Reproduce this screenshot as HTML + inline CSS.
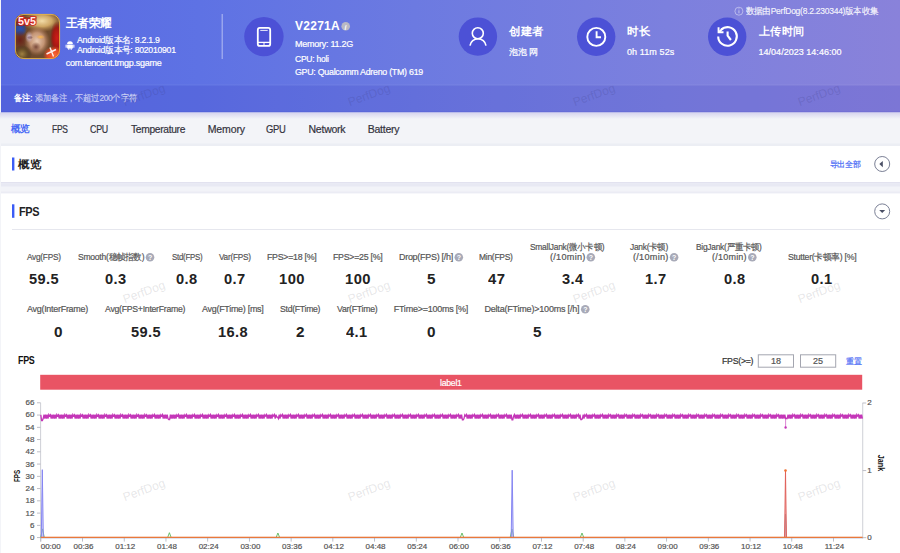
<!DOCTYPE html>
<html><head><meta charset="utf-8">
<style>
html,body{margin:0;padding:0;width:900px;height:553px;overflow:hidden;background:#f3f4f8;font-family:"Liberation Sans",sans-serif;}
.t{position:absolute;white-space:nowrap;display:block;}
.r{-webkit-text-stroke:0.2px currentColor;}
svg{position:absolute;left:0;top:0;}
</style></head><body>
<svg width="900" height="553" viewBox="0 0 900 553">
<defs>
<linearGradient id="hg" x1="0" y1="0" x2="1" y2="0">
<stop offset="0" stop-color="#586ae2"/>
<stop offset="0.22" stop-color="#5e72e4"/>
<stop offset="0.46" stop-color="#6c7ae1"/>
<stop offset="0.74" stop-color="#7c80de"/>
<stop offset="1" stop-color="#8982da"/>
</linearGradient>
<linearGradient id="sh" x1="0" y1="0" x2="0" y2="1">
<stop offset="0" stop-color="#d6d4ee"/>
<stop offset="1" stop-color="#f3f4f8"/>
</linearGradient>
<linearGradient id="cs" x1="0" y1="0" x2="0" y2="1">
<stop offset="0" stop-color="#e6e7ef"/>
<stop offset="1" stop-color="#eff0f5"/>
</linearGradient>
<radialGradient id="face" cx="0.55" cy="0.55" r="0.6">
<stop offset="0" stop-color="#e8b890"/>
<stop offset="0.45" stop-color="#b87850"/>
<stop offset="1" stop-color="#5a3020"/>
</radialGradient>
<clipPath id="icl"><rect x="15" y="14" width="45" height="45" rx="9"/></clipPath>
</defs>
<!-- page left strip -->
<rect x="0" y="0" width="900" height="553" fill="#f3f4f8"/>
<!-- header -->
<rect x="1" y="0" width="899" height="112.5" fill="url(#hg)"/>
<rect x="1" y="84.3" width="899" height="1.2" fill="#fff" fill-opacity="0.05"/>
<rect x="1" y="85.6" width="899" height="26.9" fill="#3030b8" fill-opacity="0.14"/>
<rect x="1" y="111.3" width="899" height="1.2" fill="#3030c8" fill-opacity="0.12"/>
<rect x="0" y="112.5" width="900" height="6.5" fill="url(#sh)"/>
<!-- android icon -->
<g fill="#fff">
<path d="M67.1 44.1 A2.9 2.9 0 0 1 72.9 44.1 Z"/>
<rect x="67.1" y="44.5" width="5.8" height="4" rx="0.5"/>
<rect x="65.6" y="44.6" width="1.1" height="3.1" rx="0.5"/>
<rect x="73.3" y="44.6" width="1.1" height="3.1" rx="0.5"/>
<rect x="68.2" y="48" width="1.2" height="1.8" rx="0.4"/>
<rect x="70.6" y="48" width="1.2" height="1.8" rx="0.4"/>
</g>
<!-- divider -->
<rect x="221.6" y="14" width="1.2" height="45" fill="#fff" fill-opacity="0.45"/>
<!-- circles -->
<circle cx="263.9" cy="36.6" r="19.7" fill="#4c51d6"/>
<circle cx="477.9" cy="36.6" r="19.2" fill="#4c51d6"/>
<circle cx="596.2" cy="36.8" r="19.2" fill="#4c51d6"/>
<circle cx="727.2" cy="36.7" r="19.2" fill="#4c51d6"/>
<!-- phone icon -->
<g fill="none" stroke="#fff">
<rect x="257.8" y="27.9" width="12.4" height="18" rx="2" stroke-width="1.8"/>
<line x1="260.3" y1="30.4" x2="267.7" y2="30.4" stroke-width="0.9"/>
<line x1="258" y1="42.4" x2="270" y2="42.4" stroke-width="1.3"/>
<line x1="264" y1="42.4" x2="264" y2="45" stroke-width="1"/>
</g>
<!-- info i -->
<circle cx="345.7" cy="26.2" r="4.3" fill="#b9b9c4"/>
<text x="344.6" y="29.6" font-size="7" font-weight="bold" font-style="italic" fill="#fff">i</text>
<!-- person icon -->
<g fill="none" stroke="#fff" stroke-width="1.6">
<circle cx="477.8" cy="33.3" r="5.5"/>
<path d="M470 45.6 A8.1 8.1 0 0 1 486 45.6"/>
</g>
<!-- clock icon -->
<g fill="none" stroke="#fff" stroke-width="1.9">
<circle cx="596.3" cy="36.9" r="9"/>
<path d="M596.6 31.2 V37.3 H601"/>
</g>
<!-- history icon -->
<g fill="none" stroke="#fff" stroke-width="2.1">
<path d="M718.2 36.4 A9.3 9.3 0 1 0 721.2 29.6"/>
<path d="M727.6 31.4 V35.6 L730.9 40" stroke-linejoin="miter"/>
</g>
<path d="M717.6 27.3 H719.5 V31.3 H723.5 V33.2 H717.6 Z" fill="#fff"/>
<path d="M719 32 L723 28.2" stroke="#fff" stroke-width="1.9"/>
<!-- top info circle -->
<circle cx="738.9" cy="11.2" r="4" fill="none" stroke="#fff" stroke-opacity="0.55" stroke-width="0.8"/>
<rect x="738.5" y="10.3" width="0.9" height="3" fill="#fff" fill-opacity="0.6"/>
<rect x="738.5" y="8.4" width="0.9" height="0.9" fill="#fff" fill-opacity="0.6"/>
<!-- cards -->
<rect x="1" y="143.5" width="899" height="3" fill="#eceef4"/>
<rect x="1" y="146" width="899" height="36" fill="#fff"/>
<rect x="1" y="182" width="899" height="12" fill="#f2f3f8"/>
<rect x="1" y="182" width="899" height="1.5" fill="#e2e2ef"/>
<rect x="1" y="183.5" width="899" height="3" fill="#e8e9f3"/>
<rect x="1" y="191.5" width="899" height="2" fill="#ebecf4"/>
<rect x="1" y="193.5" width="899" height="360" fill="#fff"/>
<rect x="12" y="157.5" width="2.4" height="13" fill="#3b5cf6"/>
<rect x="12" y="204.3" width="2.4" height="13.5" fill="#3b5cf6"/>
<rect x="12" y="229" width="878" height="1" fill="#e6e7ee"/>
<!-- collapse buttons -->
<circle cx="882.2" cy="164" r="7.5" fill="none" stroke="#7a7f95" stroke-width="1"/>
<path d="M879.3 164 L882.8 161.1 L882.8 167.2 Z" fill="#4a4f65"/>
<circle cx="882.2" cy="211.4" r="7.5" fill="none" stroke="#7a7f95" stroke-width="1"/>
<path d="M879.2 209.9 L885.2 209.9 L882.2 212.9 Z" fill="#4a4f65"/>
<rect x="758.3" y="354.8" width="35.2" height="12.4" fill="#fff" stroke="#a4a6b0" stroke-width="1"/>
<rect x="800.5" y="354.8" width="35.2" height="12.4" fill="#fff" stroke="#a4a6b0" stroke-width="1"/>
<rect x="40.2" y="374.8" width="822" height="14.9" fill="#e95464"/>
<rect x="40.2" y="402.8" width="0.9" height="138.8" fill="#c9cad2"/>
<rect x="37" y="537.15" width="3.6" height="0.9" fill="#b8b9c2"/>
<rect x="37" y="524.90" width="3.6" height="0.9" fill="#b8b9c2"/>
<rect x="37" y="512.64" width="3.6" height="0.9" fill="#b8b9c2"/>
<rect x="37" y="500.39" width="3.6" height="0.9" fill="#b8b9c2"/>
<rect x="37" y="488.13" width="3.6" height="0.9" fill="#b8b9c2"/>
<rect x="37" y="475.88" width="3.6" height="0.9" fill="#b8b9c2"/>
<rect x="37" y="463.62" width="3.6" height="0.9" fill="#b8b9c2"/>
<rect x="37" y="451.37" width="3.6" height="0.9" fill="#b8b9c2"/>
<rect x="37" y="439.11" width="3.6" height="0.9" fill="#b8b9c2"/>
<rect x="37" y="426.86" width="3.6" height="0.9" fill="#b8b9c2"/>
<rect x="37" y="414.60" width="3.6" height="0.9" fill="#b8b9c2"/>
<rect x="37" y="402.35" width="3.6" height="0.9" fill="#b8b9c2"/>
<rect x="862.30" y="402.8" width="0.9" height="135.8" fill="#c9cad2"/>
<rect x="862.6" y="402.55" width="3.6" height="0.9" fill="#b8b9c2"/>
<rect x="862.6" y="470.15" width="3.6" height="0.9" fill="#b8b9c2"/>
<rect x="862.6" y="537.25" width="3.6" height="0.9" fill="#b8b9c2"/>
<rect x="40.35" y="537.6" width="0.9" height="4" fill="#b8b9c2"/>
<rect x="82.07" y="537.6" width="0.9" height="4" fill="#b8b9c2"/>
<rect x="123.79" y="537.6" width="0.9" height="4" fill="#b8b9c2"/>
<rect x="165.51" y="537.6" width="0.9" height="4" fill="#b8b9c2"/>
<rect x="207.23" y="537.6" width="0.9" height="4" fill="#b8b9c2"/>
<rect x="248.95" y="537.6" width="0.9" height="4" fill="#b8b9c2"/>
<rect x="290.67" y="537.6" width="0.9" height="4" fill="#b8b9c2"/>
<rect x="332.39" y="537.6" width="0.9" height="4" fill="#b8b9c2"/>
<rect x="374.11" y="537.6" width="0.9" height="4" fill="#b8b9c2"/>
<rect x="415.83" y="537.6" width="0.9" height="4" fill="#b8b9c2"/>
<rect x="457.55" y="537.6" width="0.9" height="4" fill="#b8b9c2"/>
<rect x="499.27" y="537.6" width="0.9" height="4" fill="#b8b9c2"/>
<rect x="540.99" y="537.6" width="0.9" height="4" fill="#b8b9c2"/>
<rect x="582.71" y="537.6" width="0.9" height="4" fill="#b8b9c2"/>
<rect x="624.43" y="537.6" width="0.9" height="4" fill="#b8b9c2"/>
<rect x="666.15" y="537.6" width="0.9" height="4" fill="#b8b9c2"/>
<rect x="707.87" y="537.6" width="0.9" height="4" fill="#b8b9c2"/>
<rect x="749.59" y="537.6" width="0.9" height="4" fill="#b8b9c2"/>
<rect x="791.31" y="537.6" width="0.9" height="4" fill="#b8b9c2"/>
<rect x="833.03" y="537.6" width="0.9" height="4" fill="#b8b9c2"/>
<path d="M40.7 537.6 L42.5 528.9 L44.3 537.6" fill="none" stroke="#5cb85c" stroke-width="0.9"/>
<path d="M167.6 537.6 L169.4 532.7 L171.2 537.6" fill="none" stroke="#5cb85c" stroke-width="0.9"/>
<path d="M276.1 537.6 L277.9 533 L279.7 537.6" fill="none" stroke="#5cb85c" stroke-width="0.9"/>
<path d="M460.2 537.6 L462.0 533 L463.8 537.6" fill="none" stroke="#5cb85c" stroke-width="0.9"/>
<path d="M510.2 537.6 L512.0 529 L513.8 537.6" fill="none" stroke="#5cb85c" stroke-width="0.9"/>
<path d="M580.2 537.6 L582.0 533 L583.8 537.6" fill="none" stroke="#5cb85c" stroke-width="0.9"/>
<path d="M41.3 537.6 L42.3 469.7 L43.3 537.6" fill="#b0b0f8" fill-opacity="0.5" stroke="#8585f2" stroke-width="1"/>
<path d="M511.2 537.6 L512.2 470.2 L513.2 537.6" fill="#b0b0f8" fill-opacity="0.5" stroke="#8585f2" stroke-width="1"/>
<path d="M784.8 537.6 L785.5 514 L786.2 537.6" fill="none" stroke="#8a8a9a" stroke-width="1"/>
<path d="M784.6 537.6 L785.5 470.6 L786.4 537.6" fill="#f0a0a8" fill-opacity="0.5" stroke="#e0605a" stroke-width="1"/>
<circle cx="785.5" cy="470.6" r="1.3" fill="#f07030"/>
<rect x="40.8" y="537.3000000000001" width="821.8000000000001" height="1.0" fill="#8fa0c8"/>
<rect x="40.8" y="536.7" width="821.8000000000001" height="1.3" fill="#e8793c"/>
<polyline points="40.80,414.80 41.60,420.50 42.40,420.50 43.20,418.60 44.00,414.60 44.80,418.60 45.60,414.60 46.40,418.60 47.20,414.60 48.00,418.60 48.80,414.60 49.60,416.00 50.40,414.80 51.20,418.60 52.00,414.60 52.80,418.60 53.60,414.60 54.40,418.60 55.20,414.60 56.00,418.60 56.80,414.60 57.60,416.00 58.40,414.80 59.20,418.60 60.00,414.60 60.80,418.60 61.60,414.60 62.40,418.60 63.20,414.60 64.00,418.60 64.80,414.60 65.60,416.00 66.40,414.80 67.20,418.60 68.00,414.60 68.80,418.60 69.60,414.60 70.40,418.60 71.20,414.60 72.00,418.60 72.80,414.60 73.60,416.00 74.40,414.80 75.20,418.60 76.00,414.60 76.80,418.60 77.60,414.60 78.40,418.60 79.20,414.60 80.00,418.60 80.80,414.60 81.60,416.00 82.40,414.80 83.20,418.60 84.00,414.60 84.80,418.60 85.60,414.60 86.40,418.60 87.20,414.60 88.00,418.60 88.80,414.60 89.60,416.00 90.40,414.80 91.20,418.60 92.00,414.60 92.80,418.60 93.60,414.60 94.40,418.60 95.20,414.60 96.00,418.60 96.80,414.60 97.60,416.00 98.40,414.80 99.20,418.60 100.00,414.60 100.80,418.60 101.60,414.60 102.40,418.60 103.20,414.60 104.00,418.60 104.80,414.60 105.60,416.00 106.40,414.80 107.20,418.60 108.00,414.60 108.80,418.60 109.60,414.60 110.40,418.60 111.20,414.60 112.00,418.60 112.80,414.60 113.60,416.00 114.40,414.80 115.20,418.60 116.00,414.60 116.80,418.60 117.60,414.60 118.40,418.60 119.20,414.60 120.00,418.60 120.80,414.60 121.60,416.00 122.40,414.80 123.20,418.60 124.00,414.60 124.80,418.60 125.60,414.60 126.40,418.60 127.20,414.60 128.00,418.60 128.80,414.60 129.60,416.00 130.40,414.80 131.20,418.60 132.00,414.60 132.80,418.60 133.60,414.60 134.40,418.60 135.20,414.60 136.00,418.60 136.80,414.60 137.60,416.00 138.40,414.80 139.20,418.60 140.00,414.60 140.80,418.60 141.60,414.60 142.40,418.60 143.20,414.60 144.00,418.60 144.80,414.60 145.60,416.00 146.40,414.80 147.20,418.60 148.00,414.60 148.80,418.60 149.60,414.60 150.40,418.60 151.20,414.60 152.00,418.60 152.80,414.80 153.60,416.00 154.40,414.60 155.20,418.60 156.00,414.60 156.80,418.60 157.60,414.60 158.40,418.60 159.20,414.60 160.00,418.60 160.80,414.80 161.60,416.00 162.40,414.60 163.20,418.60 164.00,414.60 164.80,418.60 165.60,414.60 166.40,418.60 167.20,414.60 168.00,418.60 168.80,419.50 169.60,419.50 170.40,414.60 171.20,418.60 172.00,414.60 172.80,418.60 173.60,414.60 174.40,418.60 175.20,414.60 176.00,418.60 176.80,414.80 177.60,416.00 178.40,414.60 179.20,418.60 180.00,414.60 180.80,418.60 181.60,414.60 182.40,418.60 183.20,414.60 184.00,418.60 184.80,414.80 185.60,416.00 186.40,414.60 187.20,418.60 188.00,414.60 188.80,418.60 189.60,414.60 190.40,418.60 191.20,414.60 192.00,418.60 192.80,414.80 193.60,416.00 194.40,414.60 195.20,418.60 196.00,414.60 196.80,418.60 197.60,414.60 198.40,418.60 199.20,414.60 200.00,418.60 200.80,414.80 201.60,416.00 202.40,414.60 203.20,418.60 204.00,414.60 204.80,418.60 205.60,414.60 206.40,418.60 207.20,414.60 208.00,418.60 208.80,414.80 209.60,416.00 210.40,414.60 211.20,418.60 212.00,414.60 212.80,418.60 213.60,414.60 214.40,418.60 215.20,414.60 216.00,418.60 216.80,414.80 217.60,416.00 218.40,414.60 219.20,418.60 220.00,414.60 220.80,418.60 221.60,414.60 222.40,418.60 223.20,414.60 224.00,418.60 224.80,414.80 225.60,416.00 226.40,414.60 227.20,418.60 228.00,414.60 228.80,418.60 229.60,414.60 230.40,418.60 231.20,414.60 232.00,418.60 232.80,414.80 233.60,416.00 234.40,414.60 235.20,418.60 236.00,414.60 236.80,418.60 237.60,414.60 238.40,418.60 239.20,414.60 240.00,418.60 240.80,414.80 241.60,416.00 242.40,414.60 243.20,418.60 244.00,414.60 244.80,418.60 245.60,414.60 246.40,418.60 247.20,414.60 248.00,418.60 248.80,414.80 249.60,416.00 250.40,414.60 251.20,418.60 252.00,414.60 252.80,418.60 253.60,414.60 254.40,418.60 255.20,414.60 256.00,418.60 256.80,414.80 257.60,416.00 258.40,414.60 259.20,418.60 260.00,414.60 260.80,418.60 261.60,414.60 262.40,418.60 263.20,414.60 264.00,418.60 264.80,414.80 265.60,416.00 266.40,414.60 267.20,418.60 268.00,414.60 268.80,418.60 269.60,414.60 270.40,418.60 271.20,414.60 272.00,418.60 272.80,414.80 273.60,416.00 274.40,414.60 275.20,418.60 276.00,414.60 276.80,417.20 277.60,417.20 278.40,418.60 279.20,414.60 280.00,418.60 280.80,414.80 281.60,416.00 282.40,414.60 283.20,418.60 284.00,414.60 284.80,418.60 285.60,414.60 286.40,418.60 287.20,414.60 288.00,418.60 288.80,414.80 289.60,416.00 290.40,414.60 291.20,418.60 292.00,414.60 292.80,418.60 293.60,414.60 294.40,418.60 295.20,414.60 296.00,418.60 296.80,414.80 297.60,416.00 298.40,414.60 299.20,418.60 300.00,414.60 300.80,418.60 301.60,414.60 302.40,418.60 303.20,414.60 304.00,418.60 304.80,414.80 305.60,416.00 306.40,414.60 307.20,418.60 308.00,414.60 308.80,418.60 309.60,414.60 310.40,418.60 311.20,414.60 312.00,418.60 312.80,414.80 313.60,416.00 314.40,414.60 315.20,418.60 316.00,414.60 316.80,418.60 317.60,414.60 318.40,418.60 319.20,414.60 320.00,418.60 320.80,414.80 321.60,416.00 322.40,414.60 323.20,418.60 324.00,414.60 324.80,418.60 325.60,414.60 326.40,418.60 327.20,414.60 328.00,418.60 328.80,414.80 329.60,416.00 330.40,414.60 331.20,418.60 332.00,414.60 332.80,418.60 333.60,414.60 334.40,418.60 335.20,414.60 336.00,418.60 336.80,414.80 337.60,416.00 338.40,414.60 339.20,418.60 340.00,414.60 340.80,418.60 341.60,414.60 342.40,418.60 343.20,414.60 344.00,418.60 344.80,414.80 345.60,416.00 346.40,414.60 347.20,418.60 348.00,414.60 348.80,418.60 349.60,414.60 350.40,418.60 351.20,414.60 352.00,418.60 352.80,414.80 353.60,416.00 354.40,414.60 355.20,418.60 356.00,414.60 356.80,418.60 357.60,414.60 358.40,418.60 359.20,414.60 360.00,418.60 360.80,414.80 361.60,416.00 362.40,414.60 363.20,418.60 364.00,414.60 364.80,418.60 365.60,414.60 366.40,418.60 367.20,414.60 368.00,418.60 368.80,414.80 369.60,416.00 370.40,414.60 371.20,418.60 372.00,414.60 372.80,418.60 373.60,414.60 374.40,418.60 375.20,414.60 376.00,418.60 376.80,414.80 377.60,416.00 378.40,414.60 379.20,418.60 380.00,414.60 380.80,418.60 381.60,414.60 382.40,418.60 383.20,414.60 384.00,418.60 384.80,414.80 385.60,416.00 386.40,414.60 387.20,418.60 388.00,414.60 388.80,418.60 389.60,414.60 390.40,418.60 391.20,414.60 392.00,418.60 392.80,414.80 393.60,416.00 394.40,414.60 395.20,418.60 396.00,414.60 396.80,418.60 397.60,414.60 398.40,418.60 399.20,414.60 400.00,418.60 400.80,414.80 401.60,416.00 402.40,414.60 403.20,418.60 404.00,414.60 404.80,418.60 405.60,414.60 406.40,418.60 407.20,414.60 408.00,418.60 408.80,414.80 409.60,416.00 410.40,414.60 411.20,418.60 412.00,414.60 412.80,418.60 413.60,414.60 414.40,418.60 415.20,414.60 416.00,418.60 416.80,414.80 417.60,416.00 418.40,414.60 419.20,418.60 420.00,414.60 420.80,418.60 421.60,414.60 422.40,418.60 423.20,414.60 424.00,418.60 424.80,414.80 425.60,416.00 426.40,414.60 427.20,418.60 428.00,414.60 428.80,418.60 429.60,414.60 430.40,418.60 431.20,414.60 432.00,418.60 432.80,414.80 433.60,416.00 434.40,414.60 435.20,418.60 436.00,414.60 436.80,418.60 437.60,414.60 438.40,418.60 439.20,414.60 440.00,418.60 440.80,414.80 441.60,416.00 442.40,414.60 443.20,418.60 444.00,414.60 444.80,418.60 445.60,414.60 446.40,418.60 447.20,414.60 448.00,418.60 448.80,414.80 449.60,416.00 450.40,414.60 451.20,418.60 452.00,414.60 452.80,418.60 453.60,414.60 454.40,418.60 455.20,414.60 456.00,418.60 456.80,414.80 457.60,416.00 458.40,414.60 459.20,418.60 460.00,414.60 460.80,418.60 461.60,414.60 462.40,419.80 463.20,419.80 464.00,418.60 464.80,414.80 465.60,416.00 466.40,414.60 467.20,418.60 468.00,414.60 468.80,418.60 469.60,414.60 470.40,418.60 471.20,414.60 472.00,418.60 472.80,414.80 473.60,416.00 474.40,414.60 475.20,418.60 476.00,414.60 476.80,418.60 477.60,414.60 478.40,418.60 479.20,414.60 480.00,418.60 480.80,414.80 481.60,416.00 482.40,414.60 483.20,418.60 484.00,414.60 484.80,418.60 485.60,414.60 486.40,418.60 487.20,414.60 488.00,418.60 488.80,414.80 489.60,416.00 490.40,414.60 491.20,418.60 492.00,414.60 492.80,418.60 493.60,414.60 494.40,418.60 495.20,414.60 496.00,418.60 496.80,414.80 497.60,416.00 498.40,414.60 499.20,418.60 500.00,414.60 500.80,418.60 501.60,414.60 502.40,418.60 503.20,414.60 504.00,418.60 504.80,414.80 505.60,416.00 506.40,414.60 507.20,418.60 508.00,414.60 508.80,418.60 509.60,414.60 510.40,418.60 511.20,414.60 512.00,419.80 512.80,419.80 513.60,416.00 514.40,414.60 515.20,418.60 516.00,414.60 516.80,418.60 517.60,414.60 518.40,418.60 519.20,414.60 520.00,418.60 520.80,414.80 521.60,416.00 522.40,414.60 523.20,418.60 524.00,414.60 524.80,418.60 525.60,414.60 526.40,418.60 527.20,414.60 528.00,418.60 528.80,414.80 529.60,416.00 530.40,414.60 531.20,418.60 532.00,414.60 532.80,418.60 533.60,414.60 534.40,418.60 535.20,414.60 536.00,418.60 536.80,414.80 537.60,416.00 538.40,414.60 539.20,418.60 540.00,414.60 540.80,418.60 541.60,414.60 542.40,418.60 543.20,414.60 544.00,418.60 544.80,414.80 545.60,416.00 546.40,414.60 547.20,418.60 548.00,414.60 548.80,418.60 549.60,414.60 550.40,418.60 551.20,414.60 552.00,418.60 552.80,414.80 553.60,416.00 554.40,414.60 555.20,418.60 556.00,414.60 556.80,418.60 557.60,414.60 558.40,418.60 559.20,414.60 560.00,418.60 560.80,414.80 561.60,416.00 562.40,414.60 563.20,418.60 564.00,414.60 564.80,418.60 565.60,414.60 566.40,418.60 567.20,414.60 568.00,418.60 568.80,414.80 569.60,416.00 570.40,414.60 571.20,418.60 572.00,414.60 572.80,418.60 573.60,414.60 574.40,418.60 575.20,414.60 576.00,418.60 576.80,414.80 577.60,416.00 578.40,414.60 579.20,418.60 580.00,414.60 580.80,419.50 581.60,419.50 582.40,418.60 583.20,414.60 584.00,418.60 584.80,414.80 585.60,416.00 586.40,414.60 587.20,418.60 588.00,414.60 588.80,418.60 589.60,414.60 590.40,418.60 591.20,414.60 592.00,418.60 592.80,414.80 593.60,416.00 594.40,414.60 595.20,418.60 596.00,414.60 596.80,418.60 597.60,414.60 598.40,418.60 599.20,414.60 600.00,418.60 600.80,414.80 601.60,416.00 602.40,414.60 603.20,418.60 604.00,414.60 604.80,418.60 605.60,414.60 606.40,418.60 607.20,414.60 608.00,418.60 608.80,414.60 609.60,416.00 610.40,414.80 611.20,418.60 612.00,414.60 612.80,418.60 613.60,414.60 614.40,418.60 615.20,414.60 616.00,418.60 616.80,414.60 617.60,416.00 618.40,414.80 619.20,418.60 620.00,414.60 620.80,418.60 621.60,414.60 622.40,418.60 623.20,414.60 624.00,418.60 624.80,414.60 625.60,416.00 626.40,414.80 627.20,418.60 628.00,414.60 628.80,418.60 629.60,414.60 630.40,418.60 631.20,414.60 632.00,418.60 632.80,414.60 633.60,416.00 634.40,414.80 635.20,418.60 636.00,414.60 636.80,418.60 637.60,414.60 638.40,418.60 639.20,414.60 640.00,418.60 640.80,414.60 641.60,416.00 642.40,414.80 643.20,418.60 644.00,414.60 644.80,418.60 645.60,414.60 646.40,418.60 647.20,414.60 648.00,418.60 648.80,414.60 649.60,416.00 650.40,414.80 651.20,418.60 652.00,414.60 652.80,418.60 653.60,414.60 654.40,418.60 655.20,414.60 656.00,418.60 656.80,414.60 657.60,416.00 658.40,414.80 659.20,418.60 660.00,414.60 660.80,418.60 661.60,414.60 662.40,418.60 663.20,414.60 664.00,418.60 664.80,414.60 665.60,416.00 666.40,414.80 667.20,418.60 668.00,414.60 668.80,418.60 669.60,414.60 670.40,418.60 671.20,414.60 672.00,418.60 672.80,414.60 673.60,416.00 674.40,414.80 675.20,418.60 676.00,414.60 676.80,418.60 677.60,414.60 678.40,418.60 679.20,414.60 680.00,418.60 680.80,414.60 681.60,416.00 682.40,414.80 683.20,418.60 684.00,414.60 684.80,418.60 685.60,414.60 686.40,418.60 687.20,414.60 688.00,418.60 688.80,414.60 689.60,416.00 690.40,414.80 691.20,418.60 692.00,414.60 692.80,418.60 693.60,414.60 694.40,418.60 695.20,414.60 696.00,418.60 696.80,414.60 697.60,416.00 698.40,414.80 699.20,418.60 700.00,414.60 700.80,418.60 701.60,414.60 702.40,418.60 703.20,414.60 704.00,418.60 704.80,414.60 705.60,416.00 706.40,414.80 707.20,418.60 708.00,414.60 708.80,418.60 709.60,414.60 710.40,418.60 711.20,414.60 712.00,418.60 712.80,414.60 713.60,416.00 714.40,414.80 715.20,418.60 716.00,414.60 716.80,418.60 717.60,414.60 718.40,418.60 719.20,414.60 720.00,418.60 720.80,414.60 721.60,416.00 722.40,414.80 723.20,418.60 724.00,414.60 724.80,418.60 725.60,414.60 726.40,418.60 727.20,414.60 728.00,418.60 728.80,414.60 729.60,416.00 730.40,414.80 731.20,418.60 732.00,414.60 732.80,418.60 733.60,414.60 734.40,418.60 735.20,414.60 736.00,418.60 736.80,414.60 737.60,416.00 738.40,414.80 739.20,418.60 740.00,414.60 740.80,418.60 741.60,414.60 742.40,418.60 743.20,414.60 744.00,418.60 744.80,414.60 745.60,416.00 746.40,414.80 747.20,418.60 748.00,414.60 748.80,418.60 749.60,414.60 750.40,418.60 751.20,414.60 752.00,418.60 752.80,414.60 753.60,416.00 754.40,414.80 755.20,418.60 756.00,414.60 756.80,418.60 757.60,414.60 758.40,418.60 759.20,414.60 760.00,418.60 760.80,414.60 761.60,416.00 762.40,414.80 763.20,418.60 764.00,414.60 764.80,418.60 765.60,414.60 766.40,418.60 767.20,414.60 768.00,418.60 768.80,414.60 769.60,416.00 770.40,414.80 771.20,418.60 772.00,414.60 772.80,418.60 773.60,414.60 774.40,418.60 775.20,414.60 776.00,418.60 776.80,414.60 777.60,416.00 778.40,414.80 779.20,418.60 780.00,414.60 780.80,418.60 781.60,414.60 782.40,418.60 783.20,414.60 784.00,418.60 784.80,414.60 785.60,418.50 786.40,418.50 787.20,418.60 788.00,414.60 788.80,418.60 789.60,414.60 790.40,418.60 791.20,414.60 792.00,418.60 792.80,414.60 793.60,416.00 794.40,414.80 795.20,418.60 796.00,414.60 796.80,418.60 797.60,414.60 798.40,418.60 799.20,414.60 800.00,418.60 800.80,414.60 801.60,416.00 802.40,414.80 803.20,418.60 804.00,414.60 804.80,418.60 805.60,414.60 806.40,418.60 807.20,414.60 808.00,418.60 808.80,414.60 809.60,416.00 810.40,414.80 811.20,418.60 812.00,414.60 812.80,418.60 813.60,414.60 814.40,418.60 815.20,414.60 816.00,418.60 816.80,414.60 817.60,416.00 818.40,414.80 819.20,418.60 820.00,414.60 820.80,418.60 821.60,414.60 822.40,418.60 823.20,414.60 824.00,418.60 824.80,414.60 825.60,416.00 826.40,414.80 827.20,418.60 828.00,414.60 828.80,418.60 829.60,414.60 830.40,418.60 831.20,414.60 832.00,418.60 832.80,414.60 833.60,416.00 834.40,414.80 835.20,418.60 836.00,414.60 836.80,418.60 837.60,414.60 838.40,418.60 839.20,414.60 840.00,418.60 840.80,414.60 841.60,416.00 842.40,414.80 843.20,418.60 844.00,414.60 844.80,418.60 845.60,414.60 846.40,418.60 847.20,414.60 848.00,418.60 848.80,414.60 849.60,416.00 850.40,414.80 851.20,418.60 852.00,414.60 852.80,418.60 853.60,414.60 854.40,418.60 855.20,414.60 856.00,418.60 856.80,414.60 857.60,416.00 858.40,414.80 859.20,418.60 860.00,414.60 860.80,418.60 861.60,414.60 862.40,418.60" fill="none" stroke="#c436b8" stroke-width="1.3"/>
<rect x="785.1" y="417" width="1" height="10" fill="#c436b8" fill-opacity="0.6"/>
<circle cx="785.6" cy="427.5" r="1.2" fill="#c436b8"/><circle cx="150.00" cy="257.20" r="4.3" fill="#a8aab8"/>
<text x="148.00" y="259.80" font-size="7" font-weight="bold" fill="#fff" font-family="Liberation Sans">?</text>
<circle cx="458.80" cy="257.20" r="4.3" fill="#a8aab8"/>
<text x="456.80" y="259.80" font-size="7" font-weight="bold" fill="#fff" font-family="Liberation Sans">?</text>
<circle cx="590.80" cy="257.20" r="4.3" fill="#a8aab8"/>
<text x="588.80" y="259.80" font-size="7" font-weight="bold" fill="#fff" font-family="Liberation Sans">?</text>
<circle cx="674.10" cy="257.20" r="4.3" fill="#a8aab8"/>
<text x="672.10" y="259.80" font-size="7" font-weight="bold" fill="#fff" font-family="Liberation Sans">?</text>
<circle cx="752.30" cy="257.20" r="4.3" fill="#a8aab8"/>
<text x="750.30" y="259.80" font-size="7" font-weight="bold" fill="#fff" font-family="Liberation Sans">?</text>
<circle cx="585.25" cy="309.20" r="4.3" fill="#a8aab8"/>
<text x="583.25" y="311.80" font-size="7" font-weight="bold" fill="#fff" font-family="Liberation Sans">?</text></svg><svg width="900" height="70" viewBox="0 0 900 70" style="position:absolute;left:0;top:0">
<defs>
<clipPath id="icl2"><rect x="15" y="14" width="45" height="45" rx="8.5"/></clipPath>
<radialGradient id="g1"><stop offset="0" stop-color="#f2dca8"/><stop offset="0.5" stop-color="#d4ac68" stop-opacity="0.95"/><stop offset="1" stop-color="#b88848" stop-opacity="0"/></radialGradient>
<radialGradient id="g2"><stop offset="0" stop-color="#e8c8b0"/><stop offset="0.55" stop-color="#c89878" stop-opacity="0.95"/><stop offset="1" stop-color="#a87050" stop-opacity="0"/></radialGradient>
<radialGradient id="g3"><stop offset="0" stop-color="#d01c18"/><stop offset="0.6" stop-color="#a81410" stop-opacity="0.9"/><stop offset="1" stop-color="#801010" stop-opacity="0"/></radialGradient>
<radialGradient id="g4"><stop offset="0" stop-color="#2850b0"/><stop offset="0.6" stop-color="#2a4898" stop-opacity="0.85"/><stop offset="1" stop-color="#2a4898" stop-opacity="0"/></radialGradient>
<radialGradient id="g5"><stop offset="0" stop-color="#a08040"/><stop offset="0.5" stop-color="#6a5028" stop-opacity="0.95"/><stop offset="1" stop-color="#3a2a18" stop-opacity="0"/></radialGradient>
<radialGradient id="g6"><stop offset="0" stop-color="#f86838"/><stop offset="0.6" stop-color="#e84a22" stop-opacity="0.95"/><stop offset="1" stop-color="#e04a28" stop-opacity="0"/></radialGradient>
<radialGradient id="g7"><stop offset="0" stop-color="#ffc050"/><stop offset="1" stop-color="#f09a38" stop-opacity="0"/></radialGradient>
<radialGradient id="g8"><stop offset="0" stop-color="#7a4a3a"/><stop offset="1" stop-color="#7a4a3a" stop-opacity="0"/></radialGradient>
<radialGradient id="g9"><stop offset="0" stop-color="#d8c8e0"/><stop offset="1" stop-color="#c0a8c0" stop-opacity="0"/></radialGradient>
<radialGradient id="g10"><stop offset="0" stop-color="#6a2018"/><stop offset="1" stop-color="#6a2018" stop-opacity="0"/></radialGradient>
</defs>
<g clip-path="url(#icl2)">
<rect x="15" y="14" width="45" height="45" fill="#6e4a2c"/>
<ellipse cx="20" cy="29" rx="7" ry="8" fill="url(#g4)"/>
<ellipse cx="20" cy="40" rx="8" ry="10" fill="url(#g10)"/>
<ellipse cx="42" cy="21" rx="20" ry="11" fill="url(#g1)"/>
<ellipse cx="57" cy="38" rx="7" ry="17" fill="url(#g3)"/>
<ellipse cx="37" cy="41" rx="13" ry="15" fill="url(#g2)"/>
<ellipse cx="29" cy="37" rx="4" ry="6" fill="url(#g9)"/>
<ellipse cx="36" cy="47" rx="5" ry="5" fill="url(#g8)"/>
<ellipse cx="40.5" cy="37" rx="4.5" ry="2.2" fill="url(#g7)"/>
<ellipse cx="30" cy="37.5" rx="2.5" ry="1.2" fill="#6a4040" fill-opacity="0.5"/>
<ellipse cx="22" cy="54" rx="10" ry="9" fill="url(#g5)"/>
<ellipse cx="54" cy="55" rx="11" ry="9" fill="url(#g6)"/>
<path d="M16 17.5 L37 16.5 L36 25 L16 26 Z" fill="#8a2418" fill-opacity="0.6"/>
<text x="18" y="24.8" font-size="10" font-weight="bold" fill="#fff0ea" font-family="Liberation Sans" stroke="#d81c1c" stroke-width="1.4" paint-order="stroke" textLength="18" lengthAdjust="spacingAndGlyphs">5v5</text>
<path d="M46.5 54 L56 49.5 M50 47.5 L53.5 56.5" stroke="#fff" stroke-opacity="0.9" stroke-width="1.4"/>
</g>
<rect x="15.4" y="14.4" width="44.2" height="44.2" rx="8.5" fill="none" stroke="#e8b850" stroke-width="0.9"/>
</svg>
<span class="t" style="top:16.94px;font-size:12px;line-height:12px;color:#fff;font-weight:700;letter-spacing:-0.360px;left:65.70px;transform:scaleX(0.9719);transform-origin:0 0;">王者荣耀</span>
<span class="t r" style="top:35.68px;font-size:9px;line-height:9px;color:#fff;font-weight:400;letter-spacing:-0.270px;left:77.10px;transform:scaleX(0.9675);transform-origin:0 0;">Android版本名: 8.2.1.9</span>
<span class="t r" style="top:46.08px;font-size:9px;line-height:9px;color:#fff;font-weight:400;letter-spacing:-0.270px;left:77.10px;transform:scaleX(0.9642);transform-origin:0 0;">Android版本号: 802010901</span>
<span class="t r" style="top:59.08px;font-size:9px;line-height:9px;color:#fff;font-weight:400;letter-spacing:-0.232px;left:65.70px;">com.tencent.tmgp.sgame</span>
<span class="t" style="top:20.04px;font-size:12px;line-height:12px;color:#fff;font-weight:700;letter-spacing:0.245px;left:295.10px;">V2271A</span>
<span class="t r" style="top:39.68px;font-size:9px;line-height:9px;color:#fff;font-weight:400;letter-spacing:-0.270px;left:295.10px;">Memory: 11.2G</span>
<span class="t r" style="top:54.58px;font-size:9px;line-height:9px;color:#fff;font-weight:400;letter-spacing:-0.270px;left:295.10px;transform:scaleX(0.9482);transform-origin:0 0;">CPU: holi</span>
<span class="t r" style="top:68.28px;font-size:9px;line-height:9px;color:#fff;font-weight:400;letter-spacing:-0.270px;left:295.10px;transform:scaleX(0.9825);transform-origin:0 0;">GPU: Qualcomm Adreno (TM) 619</span>
<span class="t" style="top:25.69px;font-size:11px;line-height:11px;color:#fff;font-weight:700;letter-spacing:0.330px;left:508.90px;transform:scaleX(1.0279);transform-origin:0 0;">创建者</span>
<span class="t r" style="top:48.10px;font-size:8.5px;line-height:8.5px;color:#fff;font-weight:400;letter-spacing:-0.159px;left:508.90px;">泡泡&nbsp;网</span>
<span class="t" style="top:25.89px;font-size:11px;line-height:11px;color:#fff;font-weight:700;letter-spacing:0.330px;left:627.00px;transform:scaleX(1.0434);transform-origin:0 0;">时长</span>
<span class="t r" style="top:48.18px;font-size:9px;line-height:9px;color:#fff;font-weight:400;letter-spacing:0.103px;left:627.00px;">0h 11m 52s</span>
<span class="t" style="top:25.89px;font-size:11px;line-height:11px;color:#fff;font-weight:700;letter-spacing:0.330px;left:758.50px;transform:scaleX(1.0091);transform-origin:0 0;">上传时间</span>
<span class="t r" style="top:47.68px;font-size:9px;line-height:9px;color:#fff;font-weight:400;letter-spacing:0.023px;left:758.50px;">14/04/2023 14:46:00</span>
<span class="t r" style="top:6.88px;font-size:9px;line-height:9px;color:rgba(255,255,255,0.88);font-weight:400;letter-spacing:-0.270px;left:746.40px;transform:scaleX(0.9436);transform-origin:0 0;">数据由PerfDog(8.2.230344)版本收集</span>
<span class="t" style="top:93.68px;font-size:9px;line-height:9px;color:#fff;font-weight:700;letter-spacing:-0.270px;left:13.60px;transform:scaleX(0.9140);transform-origin:0 0;">备注:</span>
<span class="t r" style="top:93.68px;font-size:9px;line-height:9px;color:rgba(255,255,255,0.6);font-weight:400;letter-spacing:-0.270px;left:35.30px;transform:scaleX(0.9220);transform-origin:0 0;">添加备注，不超过200个字符</span>
<span class="t" style="top:124.44px;font-size:10px;line-height:10px;color:#4b6bf5;font-weight:700;letter-spacing:-0.300px;left:11.40px;transform:scaleX(0.9594);transform-origin:0 0;">概览</span>
<span class="t r" style="top:124.01px;font-size:10.5px;line-height:10.5px;color:#33333d;font-weight:400;letter-spacing:-0.315px;left:52.10px;transform:scaleX(0.8084);transform-origin:0 0;">FPS</span>
<span class="t r" style="top:124.01px;font-size:10.5px;line-height:10.5px;color:#33333d;font-weight:400;letter-spacing:-0.315px;left:90.10px;transform:scaleX(0.8449);transform-origin:0 0;">CPU</span>
<span class="t r" style="top:124.01px;font-size:10.5px;line-height:10.5px;color:#33333d;font-weight:400;letter-spacing:-0.315px;left:130.80px;transform:scaleX(0.9749);transform-origin:0 0;">Temperature</span>
<span class="t r" style="top:124.01px;font-size:10.5px;line-height:10.5px;color:#33333d;font-weight:400;letter-spacing:-0.104px;left:207.70px;">Memory</span>
<span class="t r" style="top:124.01px;font-size:10.5px;line-height:10.5px;color:#33333d;font-weight:400;letter-spacing:-0.315px;left:266.40px;transform:scaleX(0.8945);transform-origin:0 0;">GPU</span>
<span class="t r" style="top:124.01px;font-size:10.5px;line-height:10.5px;color:#33333d;font-weight:400;letter-spacing:-0.236px;left:308.50px;">Network</span>
<span class="t r" style="top:124.01px;font-size:10.5px;line-height:10.5px;color:#33333d;font-weight:400;letter-spacing:-0.244px;left:367.70px;">Battery</span>
<span class="t" style="top:158.89px;font-size:11px;line-height:11px;color:#222;font-weight:700;letter-spacing:0.330px;left:18.10px;transform:scaleX(1.0434);transform-origin:0 0;">概览</span>
<span class="t" style="top:205.20px;font-size:13px;line-height:13px;color:#222;font-weight:700;letter-spacing:-0.390px;left:18.70px;transform:scaleX(0.8402);transform-origin:0 0;">FPS</span>
<span class="t r" style="top:161.43px;font-size:8px;line-height:8px;color:#4b6bf5;font-weight:400;letter-spacing:-0.200px;left:829.50px;">导出全部</span>
<span class="t r" style="top:253.18px;font-size:9px;line-height:9px;color:#555;font-weight:400;letter-spacing:-0.270px;left:27.35px;transform:scaleX(0.9174);transform-origin:0 0;">Avg(FPS)</span>
<span class="t" style="top:272.15px;font-size:14px;line-height:14px;color:#222;font-weight:700;letter-spacing:0.420px;left:29.45px;transform:scaleX(1.0418);transform-origin:0 0;">59.5</span>
<span class="t r" style="top:253.18px;font-size:9px;line-height:9px;color:#555;font-weight:400;letter-spacing:-0.270px;left:77.70px;transform:scaleX(0.9508);transform-origin:0 0;">Smooth(稳帧指数)</span>
<span class="t" style="top:272.15px;font-size:14px;line-height:14px;color:#222;font-weight:700;letter-spacing:0.420px;left:105.39px;transform:scaleX(1.0449);transform-origin:0 0;">0.3</span>
<span class="t r" style="top:253.18px;font-size:9px;line-height:9px;color:#555;font-weight:400;letter-spacing:-0.270px;left:171.65px;transform:scaleX(0.8740);transform-origin:0 0;">Std(FPS)</span>
<span class="t" style="top:272.15px;font-size:14px;line-height:14px;color:#222;font-weight:700;letter-spacing:0.420px;left:176.39px;transform:scaleX(1.0449);transform-origin:0 0;">0.8</span>
<span class="t r" style="top:253.18px;font-size:9px;line-height:9px;color:#555;font-weight:400;letter-spacing:-0.270px;left:218.85px;transform:scaleX(0.9126);transform-origin:0 0;">Var(FPS)</span>
<span class="t" style="top:272.15px;font-size:14px;line-height:14px;color:#222;font-weight:700;letter-spacing:0.420px;left:224.19px;transform:scaleX(1.0449);transform-origin:0 0;">0.7</span>
<span class="t r" style="top:253.18px;font-size:9px;line-height:9px;color:#555;font-weight:400;letter-spacing:-0.270px;left:266.60px;transform:scaleX(0.9797);transform-origin:0 0;">FPS>=18 [%]</span>
<span class="t" style="top:272.15px;font-size:14px;line-height:14px;color:#222;font-weight:700;letter-spacing:0.420px;left:278.77px;transform:scaleX(1.0522);transform-origin:0 0;">100</span>
<span class="t r" style="top:253.18px;font-size:9px;line-height:9px;color:#555;font-weight:400;letter-spacing:-0.270px;left:332.60px;transform:scaleX(0.9797);transform-origin:0 0;">FPS>=25 [%]</span>
<span class="t" style="top:272.15px;font-size:14px;line-height:14px;color:#222;font-weight:700;letter-spacing:0.420px;left:344.77px;transform:scaleX(1.0522);transform-origin:0 0;">100</span>
<span class="t r" style="top:253.18px;font-size:9px;line-height:9px;color:#555;font-weight:400;letter-spacing:-0.270px;left:398.90px;transform:scaleX(0.9944);transform-origin:0 0;">Drop(FPS) [/h]</span>
<span class="t" style="top:272.15px;font-size:14px;line-height:14px;color:#222;font-weight:700;left:426.75px;transform:scaleX(1.0900);transform-origin:0 0;">5</span>
<span class="t r" style="top:253.18px;font-size:9px;line-height:9px;color:#555;font-weight:400;letter-spacing:-0.270px;left:479.35px;transform:scaleX(0.9388);transform-origin:0 0;">Min(FPS)</span>
<span class="t" style="top:272.15px;font-size:14px;line-height:14px;color:#222;font-weight:700;letter-spacing:0.420px;left:487.81px;transform:scaleX(1.0614);transform-origin:0 0;">47</span>
<span class="t r" style="top:253.18px;font-size:9px;line-height:9px;color:#555;font-weight:400;letter-spacing:0.270px;left:549.70px;transform:scaleX(1.0142);transform-origin:0 0;">(/10min)</span>
<span class="t" style="top:272.15px;font-size:14px;line-height:14px;color:#222;font-weight:700;letter-spacing:0.420px;left:561.79px;transform:scaleX(1.0449);transform-origin:0 0;">3.4</span>
<span class="t r" style="top:253.18px;font-size:9px;line-height:9px;color:#555;font-weight:400;letter-spacing:0.270px;left:633.00px;transform:scaleX(1.0142);transform-origin:0 0;">(/10min)</span>
<span class="t" style="top:272.15px;font-size:14px;line-height:14px;color:#222;font-weight:700;letter-spacing:0.420px;left:645.09px;transform:scaleX(1.0449);transform-origin:0 0;">1.7</span>
<span class="t r" style="top:253.18px;font-size:9px;line-height:9px;color:#555;font-weight:400;letter-spacing:0.226px;left:712.00px;">(/10min)</span>
<span class="t" style="top:272.15px;font-size:14px;line-height:14px;color:#222;font-weight:700;letter-spacing:0.420px;left:723.69px;transform:scaleX(1.0449);transform-origin:0 0;">0.8</span>
<span class="t r" style="top:253.18px;font-size:9px;line-height:9px;color:#555;font-weight:400;letter-spacing:-0.270px;left:787.50px;transform:scaleX(0.9667);transform-origin:0 0;">Stutter(卡顿率) [%]</span>
<span class="t" style="top:272.15px;font-size:14px;line-height:14px;color:#222;font-weight:700;letter-spacing:0.420px;left:811.19px;transform:scaleX(1.0449);transform-origin:0 0;">0.1</span>
<span class="t r" style="top:243.38px;font-size:9px;line-height:9px;color:#555;font-weight:400;letter-spacing:-0.270px;left:529.75px;transform:scaleX(0.9343);transform-origin:0 0;">SmallJank(微小卡顿)</span>
<span class="t r" style="top:243.38px;font-size:9px;line-height:9px;color:#555;font-weight:400;letter-spacing:-0.270px;left:630.40px;transform:scaleX(0.9337);transform-origin:0 0;">Jank(卡顿)</span>
<span class="t r" style="top:243.38px;font-size:9px;line-height:9px;color:#555;font-weight:400;letter-spacing:-0.270px;left:695.55px;transform:scaleX(0.9311);transform-origin:0 0;">BigJank(严重卡顿)</span>
<span class="t r" style="top:305.08px;font-size:9px;line-height:9px;color:#555;font-weight:400;letter-spacing:-0.270px;left:27.40px;transform:scaleX(0.9938);transform-origin:0 0;">Avg(InterFrame)</span>
<span class="t" style="top:325.15px;font-size:14px;line-height:14px;color:#222;font-weight:700;left:53.75px;transform:scaleX(1.0900);transform-origin:0 0;">0</span>
<span class="t r" style="top:305.08px;font-size:9px;line-height:9px;color:#555;font-weight:400;letter-spacing:-0.270px;left:105.25px;transform:scaleX(0.9668);transform-origin:0 0;">Avg(FPS+InterFrame)</span>
<span class="t" style="top:325.15px;font-size:14px;line-height:14px;color:#222;font-weight:700;letter-spacing:0.420px;left:130.65px;transform:scaleX(1.0418);transform-origin:0 0;">59.5</span>
<span class="t r" style="top:305.08px;font-size:9px;line-height:9px;color:#555;font-weight:400;letter-spacing:-0.270px;left:202.10px;transform:scaleX(0.9930);transform-origin:0 0;">Avg(FTime) [ms]</span>
<span class="t" style="top:325.15px;font-size:14px;line-height:14px;color:#222;font-weight:700;letter-spacing:0.420px;left:218.15px;transform:scaleX(1.0418);transform-origin:0 0;">16.8</span>
<span class="t r" style="top:305.08px;font-size:9px;line-height:9px;color:#555;font-weight:400;letter-spacing:-0.270px;left:280.05px;transform:scaleX(0.9588);transform-origin:0 0;">Std(FTime)</span>
<span class="t" style="top:325.15px;font-size:14px;line-height:14px;color:#222;font-weight:700;left:296.05px;transform:scaleX(1.0900);transform-origin:0 0;">2</span>
<span class="t r" style="top:305.08px;font-size:9px;line-height:9px;color:#555;font-weight:400;letter-spacing:-0.270px;left:336.60px;transform:scaleX(0.9651);transform-origin:0 0;">Var(FTime)</span>
<span class="t" style="top:325.15px;font-size:14px;line-height:14px;color:#222;font-weight:700;letter-spacing:0.420px;left:346.29px;transform:scaleX(1.0449);transform-origin:0 0;">4.1</span>
<span class="t r" style="top:305.08px;font-size:9px;line-height:9px;color:#555;font-weight:400;letter-spacing:-0.240px;left:393.70px;">FTime>=100ms [%]</span>
<span class="t" style="top:325.15px;font-size:14px;line-height:14px;color:#222;font-weight:700;left:426.75px;transform:scaleX(1.0900);transform-origin:0 0;">0</span>
<span class="t r" style="top:305.08px;font-size:9px;line-height:9px;color:#555;font-weight:400;letter-spacing:-0.198px;left:484.45px;">Delta(FTime)>100ms [/h]</span>
<span class="t" style="top:325.15px;font-size:14px;line-height:14px;color:#222;font-weight:700;left:532.75px;transform:scaleX(1.0900);transform-origin:0 0;">5</span>
<span class="t" style="top:356.14px;font-size:10px;line-height:10px;color:#111;font-weight:700;letter-spacing:-0.300px;left:17.80px;transform:scaleX(0.8911);transform-origin:0 0;">FPS</span>
<span class="t r" style="top:356.98px;font-size:9px;line-height:9px;color:#333;font-weight:400;letter-spacing:-0.270px;left:721.50px;transform:scaleX(0.9724);transform-origin:0 0;">FPS(>=)</span>
<span class="t r" style="top:357.38px;font-size:9px;line-height:9px;color:#555;font-weight:400;left:770.89px;">18</span>
<span class="t r" style="top:357.38px;font-size:9px;line-height:9px;color:#555;font-weight:400;left:813.09px;">25</span>
<span class="t r" style="top:358.23px;font-size:8px;line-height:8px;color:#4b6bf5;font-weight:400;letter-spacing:-0.240px;left:846.40px;">重置</span>
<span class="t r" style="top:378.58px;font-size:9px;line-height:9px;color:#fff;font-weight:400;letter-spacing:-0.270px;left:439.65px;transform:scaleX(0.9656);transform-origin:0 0;">label1</span>
<span class="t r" style="top:534.03px;font-size:8px;line-height:8px;color:#555;font-weight:400;right:865.5px;">0</span>
<span class="t r" style="top:521.77px;font-size:8px;line-height:8px;color:#555;font-weight:400;right:865.5px;">6</span>
<span class="t r" style="top:509.52px;font-size:8px;line-height:8px;color:#555;font-weight:400;right:865.5px;">12</span>
<span class="t r" style="top:497.26px;font-size:8px;line-height:8px;color:#555;font-weight:400;right:865.5px;">18</span>
<span class="t r" style="top:485.01px;font-size:8px;line-height:8px;color:#555;font-weight:400;right:865.5px;">24</span>
<span class="t r" style="top:472.76px;font-size:8px;line-height:8px;color:#555;font-weight:400;right:865.5px;">30</span>
<span class="t r" style="top:460.50px;font-size:8px;line-height:8px;color:#555;font-weight:400;right:865.5px;">36</span>
<span class="t r" style="top:448.25px;font-size:8px;line-height:8px;color:#555;font-weight:400;right:865.5px;">42</span>
<span class="t r" style="top:435.99px;font-size:8px;line-height:8px;color:#555;font-weight:400;right:865.5px;">48</span>
<span class="t r" style="top:423.74px;font-size:8px;line-height:8px;color:#555;font-weight:400;right:865.5px;">54</span>
<span class="t r" style="top:411.48px;font-size:8px;line-height:8px;color:#555;font-weight:400;right:865.5px;">60</span>
<span class="t r" style="top:399.23px;font-size:8px;line-height:8px;color:#555;font-weight:400;right:865.5px;">66</span>
<span class="t r" style="top:542.73px;font-size:8px;line-height:8px;color:#555;font-weight:400;left:40.70px;">00:00</span>
<span class="t r" style="top:542.73px;font-size:8px;line-height:8px;color:#555;font-weight:400;left:73.50px;">00:36</span>
<span class="t r" style="top:542.73px;font-size:8px;line-height:8px;color:#555;font-weight:400;left:115.22px;">01:12</span>
<span class="t r" style="top:542.73px;font-size:8px;line-height:8px;color:#555;font-weight:400;left:156.94px;">01:48</span>
<span class="t r" style="top:542.73px;font-size:8px;line-height:8px;color:#555;font-weight:400;left:198.66px;">02:24</span>
<span class="t r" style="top:542.73px;font-size:8px;line-height:8px;color:#555;font-weight:400;left:240.38px;">03:00</span>
<span class="t r" style="top:542.73px;font-size:8px;line-height:8px;color:#555;font-weight:400;left:282.10px;">03:36</span>
<span class="t r" style="top:542.73px;font-size:8px;line-height:8px;color:#555;font-weight:400;left:323.82px;">04:12</span>
<span class="t r" style="top:542.73px;font-size:8px;line-height:8px;color:#555;font-weight:400;left:365.54px;">04:48</span>
<span class="t r" style="top:542.73px;font-size:8px;line-height:8px;color:#555;font-weight:400;left:407.26px;">05:24</span>
<span class="t r" style="top:542.73px;font-size:8px;line-height:8px;color:#555;font-weight:400;left:448.98px;">06:00</span>
<span class="t r" style="top:542.73px;font-size:8px;line-height:8px;color:#555;font-weight:400;left:490.70px;">06:36</span>
<span class="t r" style="top:542.73px;font-size:8px;line-height:8px;color:#555;font-weight:400;left:532.42px;">07:12</span>
<span class="t r" style="top:542.73px;font-size:8px;line-height:8px;color:#555;font-weight:400;left:574.14px;">07:48</span>
<span class="t r" style="top:542.73px;font-size:8px;line-height:8px;color:#555;font-weight:400;left:615.86px;">08:24</span>
<span class="t r" style="top:542.73px;font-size:8px;line-height:8px;color:#555;font-weight:400;left:657.58px;">09:00</span>
<span class="t r" style="top:542.73px;font-size:8px;line-height:8px;color:#555;font-weight:400;left:699.30px;">09:36</span>
<span class="t r" style="top:542.73px;font-size:8px;line-height:8px;color:#555;font-weight:400;left:741.02px;">10:12</span>
<span class="t r" style="top:542.73px;font-size:8px;line-height:8px;color:#555;font-weight:400;left:782.74px;">10:48</span>
<span class="t r" style="top:542.73px;font-size:8px;line-height:8px;color:#555;font-weight:400;left:824.76px;">11:24</span>
<span class="t r" style="top:399.43px;font-size:8px;line-height:8px;color:#555;font-weight:400;left:867.20px;">2</span>
<span class="t r" style="top:467.03px;font-size:8px;line-height:8px;color:#555;font-weight:400;left:867.20px;">1</span>
<span class="t r" style="top:534.13px;font-size:8px;line-height:8px;color:#555;font-weight:400;left:867.20px;">0</span><div class="t" style="left:114px;top:87px;width:60px;text-align:center;font-size:12px;line-height:16px;color:rgba(60,60,130,0.2);transform:rotate(-20deg);">PerfDog</div><div class="t" style="left:339px;top:87px;width:60px;text-align:center;font-size:12px;line-height:16px;color:rgba(60,60,130,0.2);transform:rotate(-20deg);">PerfDog</div><div class="t" style="left:564px;top:87px;width:60px;text-align:center;font-size:12px;line-height:16px;color:rgba(60,60,130,0.2);transform:rotate(-20deg);">PerfDog</div><div class="t" style="left:789px;top:87px;width:60px;text-align:center;font-size:12px;line-height:16px;color:rgba(60,60,130,0.2);transform:rotate(-20deg);">PerfDog</div><div class="t" style="left:114px;top:284px;width:60px;text-align:center;font-size:12px;line-height:16px;color:rgba(128,128,138,0.2);transform:rotate(-20deg);">PerfDog</div><div class="t" style="left:339px;top:284px;width:60px;text-align:center;font-size:12px;line-height:16px;color:rgba(128,128,138,0.2);transform:rotate(-20deg);">PerfDog</div><div class="t" style="left:564px;top:284px;width:60px;text-align:center;font-size:12px;line-height:16px;color:rgba(128,128,138,0.2);transform:rotate(-20deg);">PerfDog</div><div class="t" style="left:789px;top:284px;width:60px;text-align:center;font-size:12px;line-height:16px;color:rgba(128,128,138,0.2);transform:rotate(-20deg);">PerfDog</div><div class="t" style="left:114px;top:482px;width:60px;text-align:center;font-size:12px;line-height:16px;color:rgba(128,128,138,0.2);transform:rotate(-20deg);">PerfDog</div><div class="t" style="left:339px;top:482px;width:60px;text-align:center;font-size:12px;line-height:16px;color:rgba(128,128,138,0.2);transform:rotate(-20deg);">PerfDog</div><div class="t" style="left:564px;top:482px;width:60px;text-align:center;font-size:12px;line-height:16px;color:rgba(128,128,138,0.2);transform:rotate(-20deg);">PerfDog</div><div class="t" style="left:789px;top:482px;width:60px;text-align:center;font-size:12px;line-height:16px;color:rgba(128,128,138,0.2);transform:rotate(-20deg);">PerfDog</div><div class="t" style="left:6.5px;top:470.4px;width:20px;text-align:center;font-size:8.5px;line-height:12px;font-weight:bold;color:#111;transform:rotate(-90deg) scaleX(0.74);">FPS</div><div class="t" style="left:869px;top:457px;width:24px;text-align:center;font-size:8.5px;line-height:12px;font-weight:bold;color:#111;transform:rotate(90deg) scaleX(0.85);">Jank</div></body></html>
